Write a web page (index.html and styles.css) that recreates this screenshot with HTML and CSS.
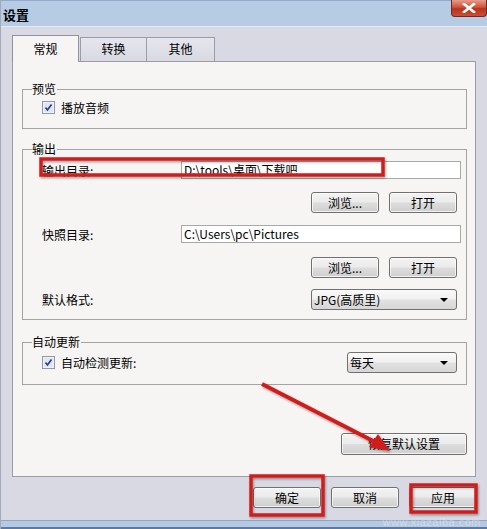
FILE: index.html
```html
<!DOCTYPE html>
<html>
<head>
<meta charset="utf-8">
<link rel="stylesheet" href="styles.css">
</head>
<body>
<div class="window">
  <div class="titlebar">
    <span class="title">设置</span>
    <div class="close">
      <svg width="16" height="10" viewBox="0 0 16 10"><path d="M3 1 L13 9 M13 1 L3 9" stroke="#fff" stroke-width="2.6" stroke-linecap="square"/></svg>
    </div>
  </div>
  <div class="body">
    <div class="tabs">
      <div class="tab active">常规</div>
      <div class="tab t2">转换</div>
      <div class="tab t3">其他</div>
    </div>
    <div class="panel">
      <div class="group g-preview">
        <span class="legend">预览</span>
        <div class="check">
          <span class="box"><svg width="13" height="13" viewBox="0 0 13 13"><rect x="0.5" y="0.5" width="12" height="12" fill="#eef0f4" stroke="#8e99ad"/><rect x="2" y="2" width="9" height="9" fill="#e2e6ee"/><path d="M3.5 6.5 L5.5 9 L9.5 3.5" fill="none" stroke="#22389a" stroke-width="1.6"/></svg></span>
          <span>播放音频</span>
        </div>
      </div>

      <div class="group g-output">
        <span class="legend">输出</span>
        <div class="row">
          <span class="lbl">输出目录:</span>
          <div class="input">D:\tools\桌面\下载吧</div>
        </div>
        <div class="btnrow">
          <div class="btn">浏览...</div>
          <div class="btn">打开</div>
        </div>
        <div class="row r2">
          <span class="lbl">快照目录:</span>
          <div class="input">C:\Users\pc\Pictures</div>
        </div>
        <div class="btnrow b2">
          <div class="btn">浏览...</div>
          <div class="btn">打开</div>
        </div>
        <div class="row r3">
          <span class="lbl">默认格式:</span>
          <div class="combo c-format"><span>JPG(高质里)</span><span class="arrow"></span></div>
        </div>
      </div>

      <div class="group g-update">
        <span class="legend">自动更新</span>
        <div class="row r-upd">
          <div class="check">
            <span class="box"><svg width="13" height="13" viewBox="0 0 13 13"><rect x="0.5" y="0.5" width="12" height="12" fill="#eef0f4" stroke="#8e99ad"/><rect x="2" y="2" width="9" height="9" fill="#e2e6ee"/><path d="M3.5 6.5 L5.5 9 L9.5 3.5" fill="none" stroke="#22389a" stroke-width="1.6"/></svg></span>
            <span>自动检测更新:</span>
          </div>
          <div class="combo c-freq"><span>每天</span><span class="arrow"></span></div>
        </div>
      </div>

      <div class="restore-row">
        <div class="btn wide">恢复默认设置</div>
      </div>
    </div>

    <div class="footer">
      <div class="btn">确定</div>
      <div class="btn">取消</div>
      <div class="btn">应用</div>
    </div>
  </div>
  <div class="frame-bottom"></div>

  <div class="watermark">www.xiazaiba.com</div>

  <svg class="annot" width="487" height="529" viewBox="0 0 487 529">
    <defs>
      <filter id="sh" x="-10%" y="-10%" width="120%" height="140%">
        <feDropShadow dx="1" dy="1.5" stdDeviation="1" flood-color="#000" flood-opacity="0.35"/>
      </filter>
    </defs>
    <g filter="url(#sh)" fill="none" stroke="#d11f1f" stroke-width="3.5">
      <rect x="40" y="159" width="342" height="16"/>
      <rect x="250" y="476" width="72" height="39"/>
      <rect x="410" y="485" width="65" height="27"/>
      <line x1="261" y1="384" x2="378" y2="444" stroke-width="4"/>
    </g>
    <polygon points="389,451 368,447 377,434" fill="#d11f1f" filter="url(#sh)"/>
  </svg>
</div>
</body>
</html>
```

FILE: styles.css
```css
* { box-sizing: border-box; }
html, body { margin: 0; padding: 0; }
body {
  width: 487px;
  height: 529px;
  overflow: hidden;
  font-family: "Noto Sans CJK SC", "Liberation Sans", sans-serif;
  font-size: 12px;
  color: #000;
}
.window {
  position: relative;
  width: 487px;
  height: 529px;
  background: #d8d9e2;
  border-left: 1px solid #a2a9b8;
  display: flex;
  flex-direction: column;
}
.titlebar {
  height: 27px;
  background: #b6cbe4;
  border-top: 1px solid #93aacb;
  border-bottom: 1px solid #e2e9f2;
  display: flex;
  justify-content: space-between;
  align-items: flex-start;
  flex-shrink: 0;
}
.title {
  font-weight: bold;
  font-size: 13px;
  line-height: 14px;
  margin: 7px 0 0 2px;
}
.close {
  width: 36px;
  height: 17px;
  margin-top: -1px;
  background: linear-gradient(#e79c8c, #cf5338 45%, #b8321b 55%, #c65136);
  border: 1px solid #6f2a22;
  border-top: none;
  border-radius: 0 0 4px 4px;
  display: flex;
  align-items: center;
  justify-content: center;
}
.body {
  flex: 1;
  display: flex;
  flex-direction: column;
}
.tabs {
  display: flex;
  align-items: flex-end;
  margin-top: 8px;
  padding-left: 11px;
  height: 26px;
}
.tab {
  width: 67px;
  height: 24px;
  border: 1px solid #9a9ca6;
  border-bottom: none;
  background: linear-gradient(#e6e7ee, #d8d9e1);
  display: flex;
  align-items: center;
  justify-content: center;
  padding-bottom: 2px;
  font-size: 12px;
}
.tab.active {
  height: 27px;
  margin-bottom: -1px;
  background: #f6f5f3;
  position: relative;
  z-index: 1;
  border-color: #8f929c;
}
.tab.t2 { margin-left: 1px; height: 24px; }
.tab.t3 { width: 69px; margin-left: -1px; height: 24px; }
.panel {
  margin-left: 11px;
  width: 464px;
  height: 416px;
  background: #f6f5f3;
  border: 1px solid #9a9ca6;
  padding: 27px 8px 0 9px;
  display: flex;
  flex-direction: column;
}
.group {
  position: relative;
  border: 1px solid #a4a4a4;
  width: 445px;
}
.legend {
  position: absolute;
  top: -8px;
  left: 9px;
  background: #f6f5f3;
  padding: 0 1px 0 0;
  line-height: 14px;
  font-size: 12px;
}
.g-preview {
  height: 40px;
  padding: 10px 0 0 19px;
}
.check {
  display: flex;
  align-items: center;
  gap: 6px;
  height: 14px;
  font-size: 12px;
}
.box { display: flex; width: 13px; height: 13px; }
.g-output {
  margin-top: 20px;
  height: 171px;
  padding: 11px 5px 0 19px;
}
.row {
  display: flex;
  align-items: center;
  height: 18px;
}
.lbl {
  width: 139px;
  font-size: 12px;
}
.input {
  width: 280px;
  height: 18px;
  background: #fff;
  border: 1px solid #a8a8a8;
  font-size: 12px;
  line-height: 16px;
  padding-left: 2px;
  white-space: nowrap;
}
.btnrow {
  display: flex;
  justify-content: flex-end;
  gap: 10px;
  margin-top: 13px;
  margin-right: 4px;
}
.btn {
  width: 68px;
  height: 21px;
  border: 1px solid #707070;
  border-radius: 3px;
  background: linear-gradient(#f3f3f3, #ebebeb 48%, #dddddd 52%, #cfcfcf);
  box-shadow: inset 0 0 0 1px rgba(255,255,255,0.7);
  display: flex;
  align-items: center;
  justify-content: center;
  font-size: 12px;
  line-height: 14px;
}
.r2 { margin-top: 12px; }
.b2 { margin-top: 14px; }
.r3 {
  margin-top: 11px;
  height: 21px;
  justify-content: space-between;
  padding-right: 4px;
}
.combo {
  height: 21px;
  border: 1px solid #707070;
  border-radius: 3px;
  background: linear-gradient(#fafafa, #f0f0f0 48%, #e2e2e2 52%, #d6d6d6);
  display: flex;
  align-items: center;
  justify-content: space-between;
  padding: 0 8px 0 2px;
  font-size: 12px;
}
.c-format { width: 146px; }
.arrow {
  width: 0;
  height: 0;
  border-left: 4px solid transparent;
  border-right: 4px solid transparent;
  border-top: 4px solid #000;
}
.g-update {
  margin-top: 22px;
  height: 43px;
  padding: 9px 0 0 19px;
}
.r-upd {
  height: 21px;
  justify-content: space-between;
  padding-right: 9px;
}
.c-freq { width: 110px; }
.restore-row {
  display: flex;
  justify-content: flex-end;
  margin-top: 48px;
}
.btn.wide { width: 126px; height: 22px; }
.footer {
  display: flex;
  gap: 10px;
  margin-top: 10px;
  padding-left: 252px;
}
.footer .btn { width: 68px; height: 21px; }
.frame-bottom {
  height: 9px;
  flex-shrink: 0;
  margin-top: auto;
  background: #b5c9e2;
  border-top: 1px solid #8fa6c4;
  border-bottom: 2px solid #5d7aa3;
}
.watermark {
  position: absolute;
  right: 6px;
  bottom: 1px;
  font-family: "Liberation Sans", sans-serif;
  font-size: 11px;
  color: rgba(255,255,255,0.35);
  letter-spacing: 0.5px;
}
.annot {
  position: absolute;
  left: 0;
  top: 0;
  pointer-events: none;
}
```
